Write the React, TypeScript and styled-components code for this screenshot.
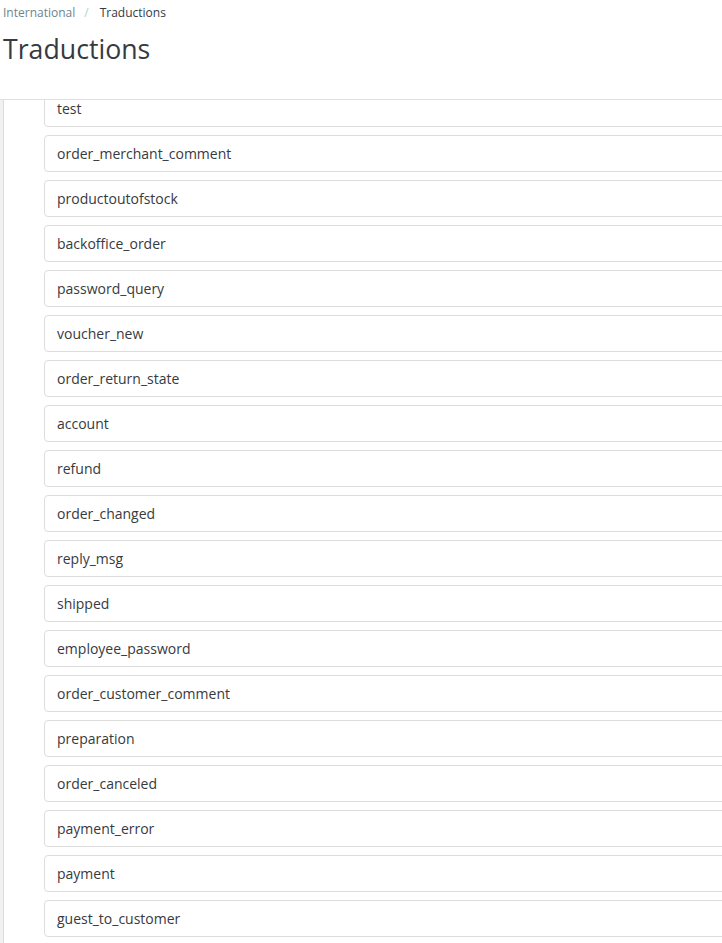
import styled, { createGlobalStyle } from 'styled-components';

const GlobalStyle = createGlobalStyle`
  html, body {
    margin: 0;
    padding: 0;
    background: #ffffff;
    font-family: 'Open Sans', 'Liberation Sans', sans-serif;
    color: #363a41;
  }
`;

const Page = styled.div`
  width: 722px;
  height: 943px;
  overflow: hidden;
  display: flex;
  flex-direction: column;
`;

const Header = styled.header`
  height: 100px;
  flex: none;
  box-sizing: border-box;
  padding: 5px 0 0 3px;
  border-bottom: 1px solid #dfdfdf;
  background: #ffffff;
`;

const Breadcrumb = styled.nav`
  display: flex;
  align-items: center;
  font-size: 12px;
  line-height: 16px;
  color: #6c868e;
`;

const Sep = styled.span`
  color: #bbcdd2;
  margin: 0 11px 0 9px;
`;

const Current = styled.span`
  color: #363a41;
`;

const Title = styled.h1`
  margin: 10px 0 0;
  font-size: 26.7px;
  line-height: 36px;
  font-weight: 400;
  color: #363a41;
`;

const Body = styled.div`
  flex: 1;
  display: flex;
  overflow: hidden;
`;

const Rail = styled.div`
  width: 3px;
  flex: none;
  background: #eff1f2;
  border-right: 1px solid #dcdcdc;
`;

const List = styled.ul`
  list-style: none;
  margin: -10px -20px 0 40px;
  padding: 0;
  flex: 1;
  display: flex;
  flex-direction: column;
  gap: 8px;
`;

const Item = styled.li`
  height: 37px;
  flex: none;
  box-sizing: border-box;
  border: 1px solid #dddddd;
  border-radius: 4px;
  padding: 0 12px;
  display: flex;
  align-items: center;
  font-size: 14px;
  color: #363a41;
`;

const keys = [
  'test',
  'order_merchant_comment',
  'productoutofstock',
  'backoffice_order',
  'password_query',
  'voucher_new',
  'order_return_state',
  'account',
  'refund',
  'order_changed',
  'reply_msg',
  'shipped',
  'employee_password',
  'order_customer_comment',
  'preparation',
  'order_canceled',
  'payment_error',
  'payment',
  'guest_to_customer',
];

export default function App() {
  return (
    <Page>
      <GlobalStyle />
      <Header>
        <Breadcrumb>
          International<Sep>/</Sep><Current>Traductions</Current>
        </Breadcrumb>
        <Title>Traductions</Title>
      </Header>
      <Body>
        <Rail />
        <List>
          {keys.map((k) => (
            <Item key={k}>{k}</Item>
          ))}
        </List>
      </Body>
    </Page>
  );
}
